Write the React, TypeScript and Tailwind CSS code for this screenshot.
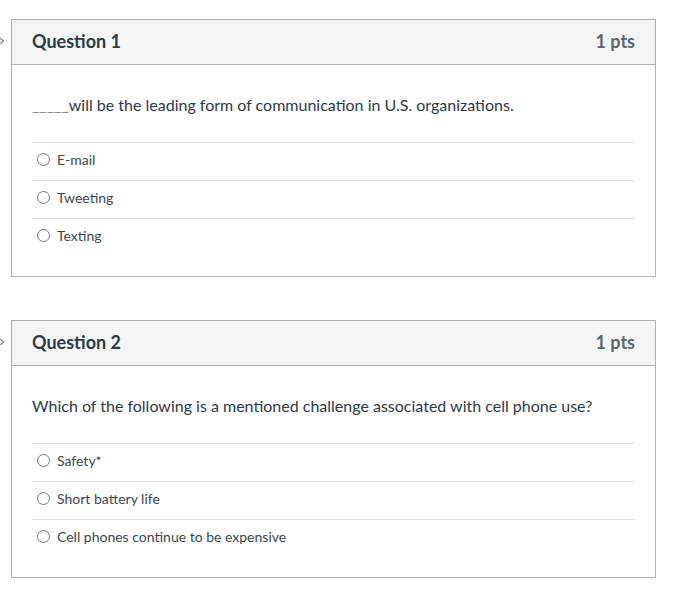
import React from "react";

const Radio = () => (
  <span className="inline-block w-[13px] h-[13px] rounded-full border border-[#7a7a7a] bg-white mr-[7px] shrink-0" />
);

function Question({ n, text, answers }: { n: number; text: React.ReactNode; answers: string[] }) {
  return (
    <div className="relative">
      <svg className="absolute left-0 top-[19px]" width="4" height="6" viewBox="0 0 4 6">
        <path d="M0 0 L3.5 3 L0 6" fill="none" stroke="#8a9196" strokeWidth="1.3" />
      </svg>
      <div className="ml-[11px] w-[645px] border border-[#acb1b4] bg-white">
        <div className="h-[45px] bg-[#f5f5f5] border-b border-[#acb1b4] flex items-center justify-between px-[20px] pb-[2px]">
          <span className="text-[18px] font-bold text-[#2d3b45]">Question {n}</span>
          <span className="text-[18px] font-bold text-[#5a6770]">1 pts</span>
        </div>
        <div className="px-[20px] pt-[28px] pb-[20px]">
          <div className="text-[16px] leading-[24px] text-[#2d3b45] mb-[25px]">{text}</div>
          {answers.map((a) => (
            <div key={a} className="h-[38px] border-t border-[#dcdfe1] flex items-center pl-[5px] pb-[4px] text-[14px] text-[#3b4750]">
              <Radio />
              <span>{a}</span>
            </div>
          ))}
        </div>
      </div>
    </div>
  );
}

export default function App() {
  return (
    <div className="w-[699px] h-[604px] bg-white pt-[19px]" style={{ fontFamily: "Lato, 'Open Sans', sans-serif" }}>
      <Question
        n={1}
        text={<><span className="text-[#8a9196]">_____</span>will be the leading form of communication in U.S. organizations.</>}
        answers={["E-mail", "Tweeting", "Texting"]}
      />
      <div className="h-[43px]" />
      <Question
        n={2}
        text="Which of the following is a mentioned challenge associated with cell phone use?"
        answers={["Safety*", "Short battery life", "Cell phones continue to be expensive"]}
      />
    </div>
  );
}
